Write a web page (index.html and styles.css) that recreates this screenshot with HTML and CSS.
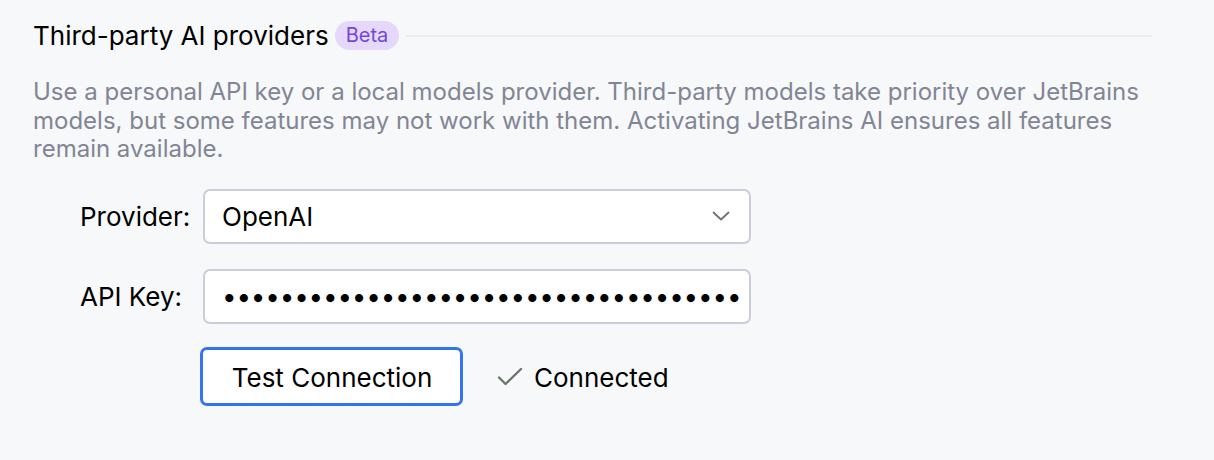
FILE: index.html
```html
<!DOCTYPE html>
<html>
<head>
<meta charset="utf-8">
<link rel="stylesheet" href="styles.css">
</head>
<body>
<div class="panel">
  <div class="header">
    <span class="title">Third-party AI providers</span>
    <span class="badge">Beta</span>
    <span class="rule"></span>
  </div>
  <p class="desc">Use a personal API key or a local models provider. Third-party models take priority over JetBrains models, but some features may not work with them. Activating JetBrains AI ensures all features remain available.</p>
  <div class="form">
    <label class="label">Provider:</label>
    <div class="field select">
      <span>OpenAI</span>
      <svg class="chev" width="18" height="10" viewBox="0 0 18 10"><path d="M1.5 1.5 L9 8.5 L16.5 1.5" fill="none" stroke="#6c707e" stroke-width="1.8" stroke-linecap="round" stroke-linejoin="round"/></svg>
    </div>
    <label class="label">API Key:</label>
    <div class="field key"><span class="dots">••••••••••••••••••••••••••••••••••••</span></div>
    <div></div>
    <div class="actions">
      <button class="btn">Test Connection</button>
      <span class="status">
        <svg width="26" height="20" viewBox="0 0 26 20"><path d="M2 10.5 L8.5 17 L24 2" fill="none" stroke="#6b776d" stroke-width="2.4" stroke-linecap="round" stroke-linejoin="round"/></svg>
        Connected
      </span>
    </div>
  </div>
</div>
</body>
</html>
```
FILE: styles.css
```css
html, body {
  margin: 0;
  padding: 0;
  background: #f7f8fa;
  font-family: Inter, "Noto Sans", sans-serif;
  color: #000;
}
.panel {
  width: 1119px;
  padding: 20px 0 0 33px;
}
.header {
  display: flex;
  align-items: center;
  height: 30px;
}
.title {
  font-size: 26px;
}
.badge {
  margin-left: 6px;
  height: 29px;
  padding: 0 11px;
  box-sizing: border-box;
  border-radius: 15px;
  background: #e5d8fc;
  color: #7448d4;
  font-size: 20px;
  display: flex;
  align-items: center;
}
.rule {
  flex: 1;
  height: 2px;
  background: #ebecf0;
  margin-left: 7px;
  margin-top: 1px;
}
.desc {
  margin: 28px 0 0 0;
  font-size: 24px;
  line-height: 28.5px;
  color: #818594;
  width: 1119px;
}
.form {
  display: grid;
  grid-template-columns: 123px 548px;
  column-gap: 0;
  row-gap: 25px;
  margin: 25px 0 0 47px;
  align-items: center;
}
.label {
  font-size: 26px;
}
.field {
  height: 55px;
  box-sizing: border-box;
  border: 2px solid #cbcdd8;
  border-radius: 7px;
  background: #fff;
  display: flex;
  align-items: center;
  padding: 0 18px 0 17px;
  font-size: 26px;
}
.select {
  justify-content: space-between;
}
.chev {
  margin-right: 1px;
}
.key {
  padding-right: 4px;
}
.dots {
  font-size: 26px;
  letter-spacing: -0.2px;
  white-space: nowrap;
}
.actions {
  display: flex;
  align-items: center;
  margin-left: -3px;
  margin-top: -2px;
}
.btn {
  height: 59px;
  width: 263px;
  border: 3px solid #3574f0;
  border-radius: 7px;
  background: #fff;
  font-family: Inter, "Noto Sans", sans-serif;
  font-size: 26px;
  color: #000;
  padding: 3px 0 0 1px;
}
.status {
  display: flex;
  align-items: center;
  gap: 11px;
  margin-left: 34px;
  font-size: 26px;
  padding-top: 2px;
}
```
